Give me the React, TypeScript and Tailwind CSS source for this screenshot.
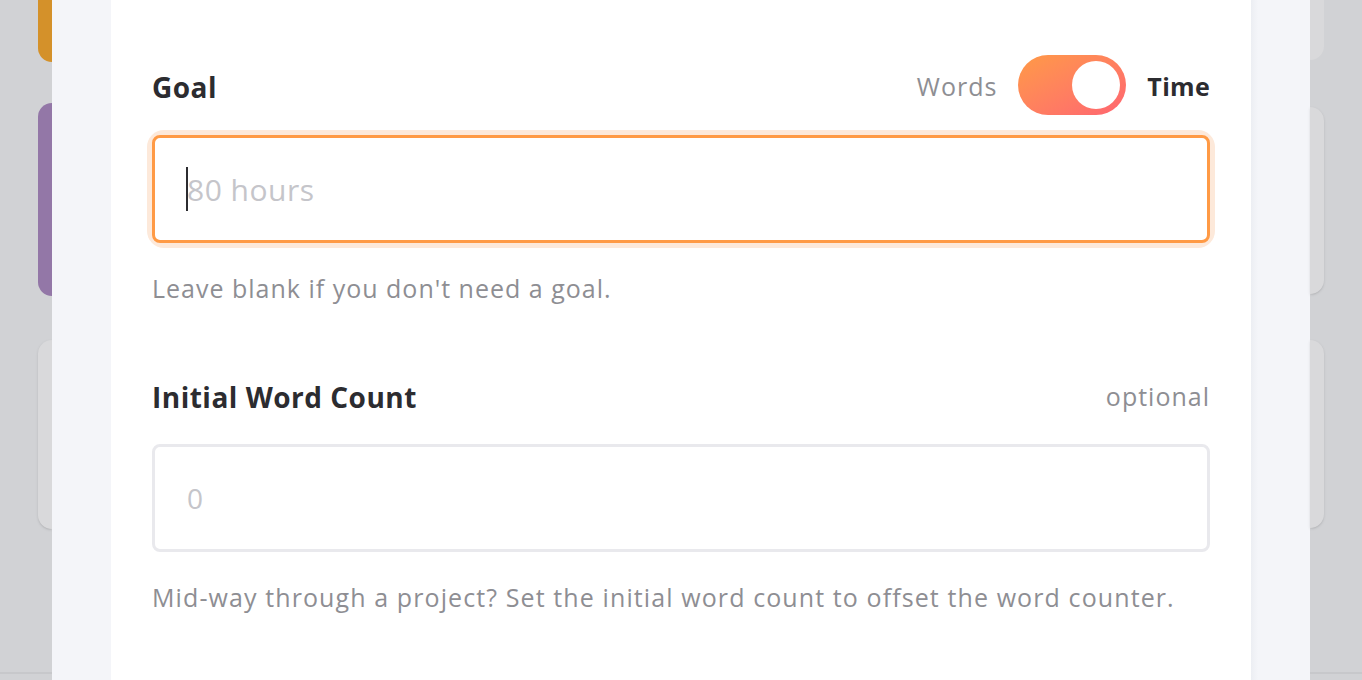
import React from 'react';

const font = { fontFamily: '"Open Sans", Lato, sans-serif' };

function SideCards({ side }: { side: 'left' | 'right' }) {
  if (side === 'left') {
    return (
      <div className="flex w-[52px] shrink-0 flex-col">
        <div className="ml-[38px] h-[62px] rounded-bl-2xl bg-[#d4912a]" />
        <div className="ml-[38px] mt-[41px] h-[193px] rounded-l-2xl bg-[#9377a7]" />
        <div className="ml-[38px] mt-[44px] h-[189px] rounded-l-2xl bg-[#d9d9db] shadow-sm" />
        <div className="mt-[143px] h-[2px] bg-[#c7c8cb]" />
      </div>
    );
  }
  return (
    <div className="flex w-[52px] shrink-0 flex-col">
      <div className="mr-[38px] h-[60px] rounded-br-2xl bg-[#d9d9db]" />
      <div className="mr-[38px] mt-[47px] h-[187px] rounded-r-2xl bg-[#d9d9db] shadow-sm" />
      <div className="mr-[38px] mt-[46px] h-[188px] rounded-r-2xl bg-[#d9d9db] shadow-sm" />
      <div className="mt-[144px] h-[2px] bg-[#c7c8cb]" />
    </div>
  );
}

function Toggle() {
  return (
    <div className="flex items-center">
      <span className="mr-[21px] mt-[4px] text-[25px] tracking-[1px] text-[#8e8e93]">Words</span>
      <div className="flex h-[60px] w-[108px] items-center justify-end rounded-full bg-gradient-to-br from-[#ff9a45] to-[#ff6470] pr-[6px]">
        <div className="h-[48px] w-[48px] rounded-full bg-white" />
      </div>
      <span className="ml-[21px] mt-[4px] text-[25px] font-bold tracking-[0.3px] text-[#2c2c30]">Time</span>
    </div>
  );
}

export default function App() {
  return (
    <div className="flex h-[680px] w-[1362px] overflow-hidden bg-[#d1d2d5]" style={font}>
      <SideCards side="left" />

      <div className="flex w-[1258px] shrink-0 bg-[#f4f5f9]">
        <div className="ml-[59px] w-[1140px] bg-white px-[41px] pt-[55px]">
          {/* Goal */}
          <div className="flex h-[60px] items-center justify-between">
            <h3 className="mt-[4px] text-[28px] font-bold tracking-[0.5px] text-[#2c2c30]">Goal</h3>
            <Toggle />
          </div>
          <div className="mt-[20px] rounded-[12px] ring-[5px] ring-[#fde9da]">
            <div className="flex h-[108px] items-center rounded-[8px] border-[3px] border-[#ff9a45] px-[31px]">
              <span className="inline-block h-[44px] w-[2px] bg-[#2c2c30]" />
              <span className="-ml-[1px] text-[30px] tracking-[0.5px] text-[#c5c5ca]">80 hours</span>
            </div>
          </div>
          <p className="mt-[29px] text-[25px] leading-[32px] tracking-[1px] text-[#8e8e93]">
            Leave blank if you don't need a goal.
          </p>

          {/* Initial word count */}
          <div className="mt-[63px] flex h-[60px] items-center justify-between">
            <h3 className="text-[28px] font-bold tracking-[0.5px] text-[#2c2c30]">Initial Word Count</h3>
            <span className="text-[25px] tracking-[1px] text-[#8e8e93]">optional</span>
          </div>
          <div className="mt-[17px] flex h-[108px] items-center rounded-[8px] border-[3px] border-[#e9e9ed] px-[32px]">
            <span className="text-[28px] text-[#c5c5ca]">0</span>
          </div>
          <p className="mt-[29px] text-[25px] leading-[32px] tracking-[1.1px] text-[#8e8e93]">
            Mid-way through a project? Set the initial word count to offset the word counter.
          </p>
        </div>
        <div className="ml-0 w-[7px] bg-gradient-to-r from-[#eceef3] to-[#f4f5f9]" />
      </div>

      <SideCards side="right" />
    </div>
  );
}
